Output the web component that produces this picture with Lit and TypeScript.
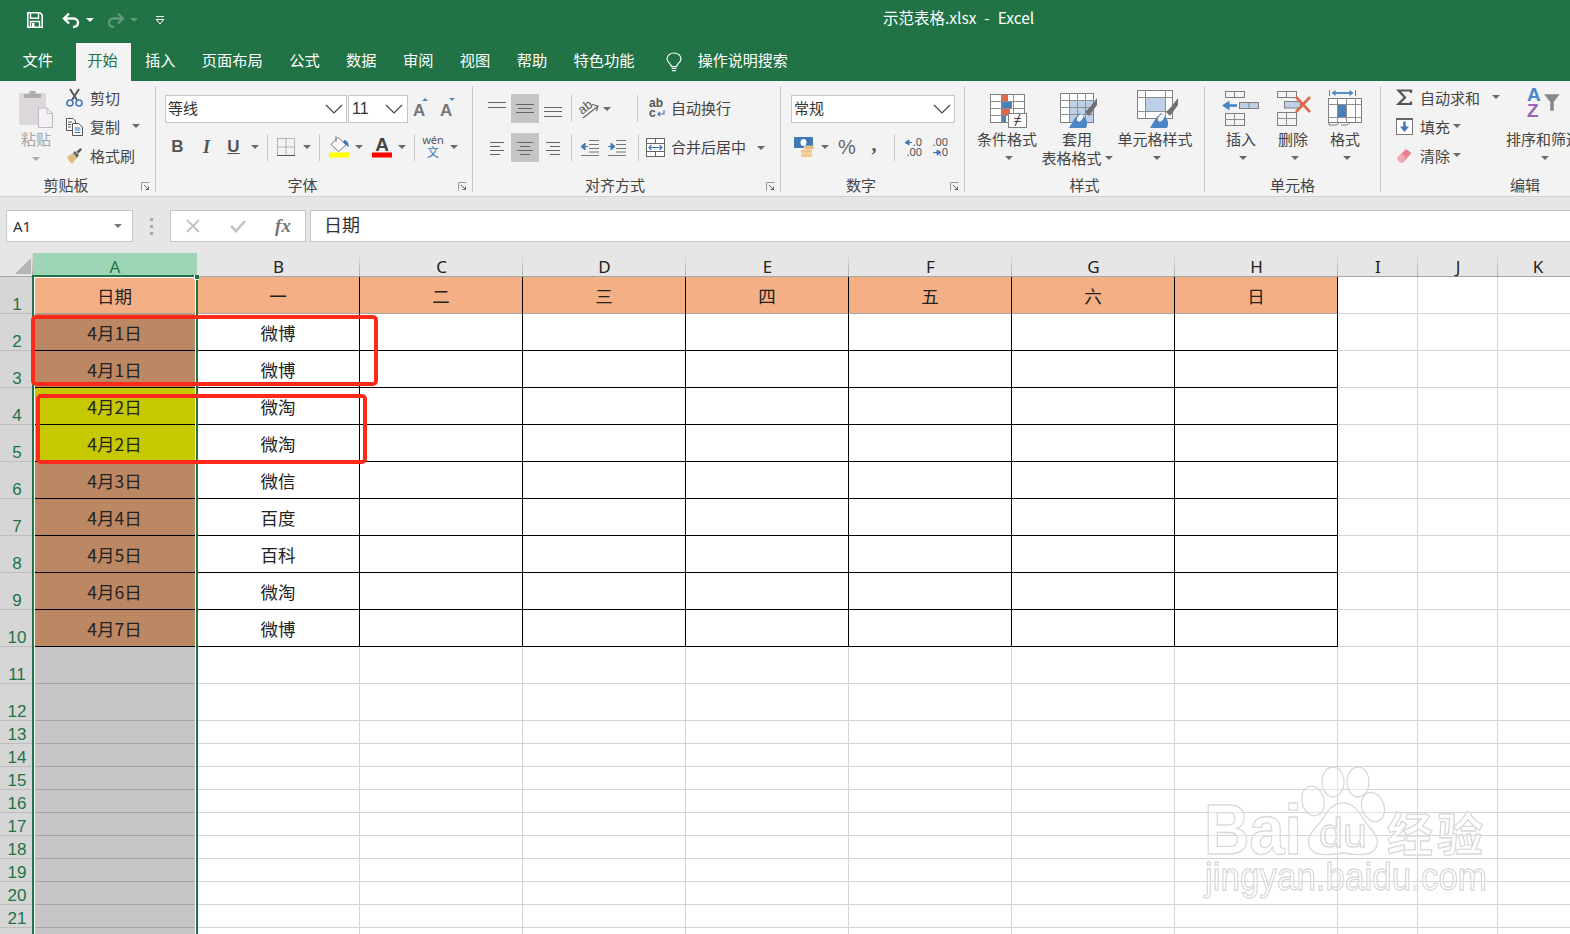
import { LitElement, html, svg, css, nothing } from "lit";
import { customElement } from "lit/decorators.js";

const tri = (c = "#6a6a6a") => html`<svg width="8" height="4" viewBox="0 0 8 4"><path d="M0 0H8L4 4Z" fill=${c}/></svg>`;
const chev = html`<svg width="18" height="10" viewBox="0 0 18 10"><path d="M1 1L9 9L17 1" fill="none" stroke="#444" stroke-width="1.2"/></svg>`;

/* ---------- title bar icons ---------- */
const icSave = html`<svg width="16" height="16" viewBox="0 0 16 16"><path d="M.8.8H13L15.2 3V15.2H.8Z" fill="none" stroke="#fff" stroke-width="1.6"/><path d="M3.5 1V6.2H11.5V1" fill="none" stroke="#fff" stroke-width="1.4"/><path d="M3.5 15V9.5H12.5V15" fill="none" stroke="#fff" stroke-width="1.4"/><rect x="5" y="11" width="2.5" height="4" fill="#fff"/></svg>`;
const icUndo = (c: string, flip: boolean) => html`<svg width="18" height="17" viewBox="0 0 18 17" class=${flip ? "flip" : ""}><path d="M7 1.5L2 6.5L7 11.5M2.5 6.5H11.5C14.5 6.5 16 8.5 16 10.5C16 12.8 14.5 15 11 15" fill="none" stroke=${c} stroke-width="2.4"/></svg>`;
const icCustom = html`<svg width="10" height="9" viewBox="0 0 10 9"><path d="M1 .6H9" stroke="#fff"/><path d="M1.2 3.5H8.8L5 8Z" fill="none" stroke="#fff"/></svg>`;
const icBulb = html`<svg width="16" height="20" viewBox="0 0 16 20"><path d="M5.4 14.5C5.2 11.5 1 10.5 1 7C1 3.3 4.2 1 8 1S15 3.3 15 7C15 10.5 10.8 11.5 10.6 14.5Z" fill="none" stroke="#fff" stroke-width="1.2"/><path d="M5.6 16.4H10.4M6.2 18.6H9.8" stroke="#fff" stroke-width="1.2"/></svg>`;

/* ---------- clipboard ---------- */
const icPaste = html`<svg width="34" height="38" viewBox="22 90 34 38"><rect x="22" y="93" width="27" height="32" rx="2" fill="#dbd7db"/><path d="M27 98V94H32.5V91H38.5V94H44V98Z" fill="#aeaaae"/><path d="M41.5 108H50L55.5 113.5V127.5H41.5Z" fill="#f4f0f7" stroke="#bdb9bd"/><path d="M50 108V113.5H55.5" fill="none" stroke="#bdb9bd"/></svg>`;
const icCut = html`<svg width="17" height="18" viewBox="0 0 17 18"><path d="M4 0L11 11M13 0L6 11" stroke="#555" stroke-width="2"/><circle cx="4" cy="14" r="3" fill="none" stroke="#3f78b4" stroke-width="1.6"/><circle cx="13" cy="14" r="3" fill="none" stroke="#3f78b4" stroke-width="1.6"/></svg>`;
const icCopy = html`<svg width="17" height="18" viewBox="0 0 17 18"><path d="M.5.5H7L9.5 3V12.5H.5Z" fill="#fff" stroke="#555"/><path d="M6.5 5.5H12.5L16.5 9V17.5H6.5Z" fill="#fff" stroke="#555"/><path d="M2 4H6M2 6.5H5M2 9H5" stroke="#555"/><path d="M8.5 10H14.5M8.5 12H14.5M8.5 14.5H14.5" stroke="#3f78b4"/></svg>`;
const icBrush = html`<svg width="17" height="18" viewBox="0 0 17 18"><path d="M1 10L7 6L11 11L6 17C4 15 2 13 1 10Z" fill="#e3bd80"/><path d="M7 6L9 4L13 8L11 11Z" fill="#6b6b6b"/><path d="M10.5 4.5L14.5 1L16 2.5L12.5 6.5Z" fill="#555"/></svg>`;

/* ---------- font ---------- */
const icGrow = (up: boolean) => html`<svg width="20" height="20" viewBox="0 0 20 20" class="up1"><text x="1" y="18" class="ta">A</text><path d=${up ? "M10 3L13 0L16 3Z" : "M10 0H16L13 3Z"} fill="#4a86c5"/></svg>`;
const icBorder = html`<svg width="18" height="18" viewBox="0 0 18 18"><path d="M.5.5H17.5V17M.5.5V17M9 .5V17M.5 9H17.5" fill="none" stroke="#777" stroke-dasharray="1 1"/><path d="M0 17.5H18" stroke="#555"/></svg>`;
const icFill = html`<svg width="22" height="22" viewBox="0 0 22 22"><path d="M10 1.500L18 9L10.5 15.500L3 8.500Z" fill="#fff" stroke="#777"/><path d="M8 0V6" stroke="#777"/><path d="M16 4C19.500 4 21 8 20.500 11C19 9.500 17.500 8.500 15 6.500Z" fill="#3f78b4"/><rect x="1" y="16.5" width="20" height="5" fill="#ff0"/></svg>`;
const icColor = html`<svg width="22" height="22" viewBox="0 0 22 22"><text x="11" y="15" text-anchor="middle" class="tc">A</text><rect x="1" y="16.5" width="20" height="5" fill="#f00"/></svg>`;
const icWen = html`<svg width="20" height="22" viewBox="0 0 20 22"><text x="10" y="8" text-anchor="middle" class="tw">wén</text><text x="10" y="20.500" text-anchor="middle" class="tz">文</text></svg>`;

/* ---------- alignment ---------- */
const lines = (ys: number[], xs: [number, number][]) => html`<svg width="20" height="20" viewBox="0 0 20 20">${ys.map((y, i) => svg`<path d="M${xs[i % xs.length][0]} ${y}.5H${xs[i % xs.length][1]}" stroke="#666"/>`)}</svg>`;
const F: [number, number][] = [[1, 19]];
const icAT = lines([3, 8], F);
const icAM = lines([5, 9, 13], [[1, 19], [3, 17]]);
const icAB = lines([8, 12, 17], F);
const icHL = lines([4, 8, 12, 16], [[3, 17], [3, 13]]);
const icHC = lines([4, 8, 12, 16], [[2, 18], [5, 15]]);
const icHR = lines([4, 8, 12, 16], [[3, 17], [7, 17]]);
const icOrient = html`<svg width="20" height="20" viewBox="0 0 20 20"><text x="0" y="13" transform="rotate(-38 6 10)" class="tor">ab</text><path d="M4 19L18 8M13 5.500L19 7L17.500 12" fill="none" stroke="#666" stroke-width="1.2"/></svg>`;
const icWrap = html`<svg width="18" height="20" viewBox="0 0 18 20"><text x="1" y="8" class="tlab">ab</text><text x="1" y="18" class="tlab">c</text><path d="M16 11V15H10M12 13L10 15L12 17" fill="none" stroke="#3f78b4" stroke-width="1.2"/></svg>`;
const icIndent = (inward: boolean) => html`<svg width="20" height="18" viewBox="0 0 20 18"><path d="M9 1.5H19M9 5.5H19M9 9.500H19M9 13H19M1 16.500H19" stroke="#777"/><path d=${inward ? "M1 7.500H5M4 4L8 7.500L4 11Z" : "M8 7.500H4M5 4L1 7.500L5 11Z"} fill="#3f78b4" stroke="#3f78b4"/></svg>`;
const icMerge = html`<svg width="19" height="19" viewBox="0 0 19 19"><rect x=".5" y=".5" width="18" height="18" fill="#fff" stroke="#666"/><path d="M.5 5.500H18.500M.5 13.500H18.500M9.500 .5V5.500M9.500 13.500V18.500" stroke="#666"/><path d="M3 9.500H16M5.500 7L3 9.500L5.500 12M13.500 7L16 9.500L13.500 12" fill="none" stroke="#3f78b4" stroke-width="1.2"/></svg>`;

/* ---------- number ---------- */
const icCur = html`<svg width="21" height="21" viewBox="0 0 21 21"><rect x="0" y="0" width="19" height="11" rx="1" fill="#3f78b4"/><ellipse cx="9.500" cy="5.500" rx="3" ry="3.500" fill="#fff"/><rect x="10" y="9" width="10" height="3" rx="1" fill="#e8b666" stroke="#f3f3f3" stroke-width=".5"/><rect x="7" y="12.500" width="11" height="3.500" rx="1" fill="#f0c888"/><rect x="7" y="16.500" width="11" height="3.500" rx="1" fill="#f0c888"/></svg>`;
const icDec = (top: string, bot: string, topArrow: boolean) => html`<svg width="24" height="22" viewBox="0 0 24 22"><text x="20" y="10" text-anchor="end" class="td">${top}</text><text x="20" y="20" text-anchor="end" class="td">${bot}</text><path d=${topArrow ? "M10 6.500H7M7 4L3 6.500L7 9Z" : "M5 16.500H9M9 14L13 16.500L9 19Z"} fill="#3f78b4" stroke="#3f78b4"/></svg>`;

/* ---------- styles (absolute-coordinate viewBoxes) ---------- */
const gridPaths = (x0: number, y0: number, x1: number, y1: number, xs: number[], ys: number[]) => svg`<rect x=${x0 + 0.5} y=${y0 + 0.5} width=${x1 - x0} height=${y1 - y0} fill="none" stroke="#7f7f7f"/>${xs.map((x) => svg`<path d="M${x}.5 ${y0}V${y1}" stroke="#8f8f8f"/>`)}${ys.map((y) => svg`<path d="M${x0} ${y}.5H${x1}" stroke="#8f8f8f"/>`)}`;
const brush = (dx: number) => svg`<g transform="translate(${dx} 0)"><path d="M1085 112L1090 107L1097 98V105L1089 116Z" fill="#707070"/><path d="M1085 118L1080 113L1075 118L1069 128H1086C1088 124 1087 120 1085 118Z" fill="#4a86c5"/><ellipse cx="1080" cy="118" rx="2.500" ry="4" fill="#f3f3f3" transform="rotate(35 1080 118)"/></g>`;
const icCond = html`<svg width="40" height="40" viewBox="987 90 40 40"><rect x="990" y="94" width="34" height="28" fill="#fff"/><rect x="1001" y="95" width="7" height="7" fill="#e0684a"/><rect x="1001" y="102" width="11" height="7" fill="#4a7fb8"/><rect x="1001" y="109" width="9" height="7" fill="#e0684a"/><rect x="1001" y="116" width="5" height="6" fill="#4a7fb8"/>${gridPaths(990, 94, 1024, 122, [1001, 1013], [101, 108, 115])}<rect x="1008.500" y="113.500" width="18" height="14" fill="#fff" stroke="#7f7f7f"/><text x="1017.500" y="125" text-anchor="middle" class="tne">≠</text></svg>`;
const icTbl = html`<svg width="40" height="40" viewBox="1057 90 40 40"><rect x="1060" y="93" width="33" height="29" fill="#fff"/><rect x="1069" y="100" width="24" height="22" fill="#bed0e6"/>${gridPaths(1060, 93, 1093, 122, [1069, 1077, 1085], [100, 107, 114])}${brush(0)}</svg>`;
const icCell = html`<svg width="40" height="40" viewBox="1135 90 40 40"><rect x="1137" y="90.500" width="35" height="28" fill="#fff"/><rect x="1145" y="97" width="20" height="14" fill="#bed0e6"/>${gridPaths(1137, 90, 1172, 118, [1145, 1165], [97, 111])}${brush(81)}</svg>`;

/* ---------- cells ---------- */
const cellsRow = (x: number, y: number, n: number, fill = "#f3f3f3") => svg`<rect x=${x + 0.5} y=${y + 0.5} width=${n * 9.5} height="6" fill=${fill} stroke="#7f7f7f"/>${Array.from({ length: n - 1 }, (_, i) => svg`<path d="M${x + 9.5 * (i + 1)} ${y}V${y + 7}" stroke="#7f7f7f"/>`)}`;
const icIns = html`<svg width="40" height="40" viewBox="1221 90 40 40">${cellsRow(1225, 91, 2)}<rect x="1239.500" y="102.500" width="19" height="6" fill="#bed0e6" stroke="#7f7f7f"/><path d="M1249 102V109" stroke="#7f7f7f"/><path d="M1237 105.500H1227" stroke="#4a86c5" stroke-width="2.600"/><path d="M1229.500 100.500L1222 105.500L1229.500 110.500Z" fill="#4a86c5"/>${gridPaths(1225, 113, 1244, 125, [1234], [119])}</svg>`;
const icDel = html`<svg width="40" height="40" viewBox="1273 90 40 40">${cellsRow(1277, 91, 2)}<rect x="1284.500" y="101.500" width="16" height="6.500" fill="#bed0e6" stroke="#7f7f7f"/>${gridPaths(1277, 112, 1296, 125, [1286], [118])}<path d="M1296 97L1310 112M1310 97L1296 112" stroke="#e0684a" stroke-width="2.600"/></svg>`;
const icFmt = html`<svg width="40" height="40" viewBox="1325 90 40 40"><path d="M1329.500 90V96M1355.500 90V96" stroke="#4a86c5"/><path d="M1333 93H1352" stroke="#4a86c5" stroke-width="1.800"/><path d="M1335.500 90L1331.500 93L1335.500 96ZM1349.500 90L1353.500 93L1349.500 96Z" fill="#4a86c5"/><rect x="1328" y="98" width="33" height="24" fill="#fff"/><rect x="1337" y="105" width="10" height="12" fill="#4a7fb8"/>${gridPaths(1328, 98, 1361, 122, [1337, 1346, 1355], [104, 117])}<path d="M1329 122V125H1337L1340 122M1341 125H1347L1351 122" fill="none" stroke="#7f7f7f"/></svg>`;

/* ---------- editing ---------- */
const icSigma = html`<svg width="17" height="17" viewBox="0 0 17 17"><path d="M15 4V1.500H2.500L9 8.500L2.500 15H15V12.500" fill="none" stroke="#555" stroke-width="2.200"/></svg>`;
const icFillD = html`<svg width="17" height="17" viewBox="0 0 17 17"><rect x=".5" y=".5" width="16" height="16" fill="#fff" stroke="#777"/><rect x="0" y="0" width="17" height="2" fill="#666"/><path d="M8.500 3.500V10" stroke="#3f78b4" stroke-width="2.400"/><path d="M4 8.500H13L8.500 14Z" fill="#3f78b4"/></svg>`;
const icErase = html`<svg width="17" height="17" viewBox="0 0 17 17"><path d="M1 11L10 2L15.500 6L7 15.500H4Z" fill="#ea8292"/><path d="M1 11L5.500 6.500L9.500 11L6 15.500H4Z" fill="#f1aab5"/></svg>`;
const icSort = html`<svg width="34" height="32" viewBox="0 0 34 32"><text x="0" y="14" class="tsa">A</text><text x="0" y="30" class="tsz">Z</text><path d="M16.500 7H33L27 15V24H23V15Z" fill="#888" stroke="#f3f3f3" stroke-width=".5"/></svg>`;

const launcher = html`<svg class="launch" width="9" height="9" viewBox="0 0 9 9"><path d="M.5 8.500V.5H8.500" fill="none" stroke="#999"/><path d="M3 3L7.500 7.500M7.500 4.500V7.500H4.500" fill="none" stroke="#666"/></svg>`;

type Cell = [number, unknown?, string?];
const SEP = "sep";

@customElement("app-root")
export class AppRoot extends LitElement {
  static styles = css`
    :host { display: block; position: relative; width: 1570px; height: 934px; overflow: hidden; background: #fff; font-family: "Noto Sans CJK SC", "Noto Sans", sans-serif; color: #444; }
    svg { display: block; flex: none; overflow: visible; }
    .flip { transform: scaleX(-1); }
    .up1 { margin-top: -2px; }
    .title { display: flex; align-items: flex-start; height: 43px; background: #217346; color: #fff; }
    .qat { display: flex; align-items: center; width: 883px; padding-left: 27px; box-sizing: border-box; height: 40px; }
    .q1 { margin-left: 19px; } .q2 { margin-left: 6px; } .q3 { margin-left: 13px; } .q4 { margin-left: 5px; } .q5 { margin-left: 17px; }
    .tname { font-size: 15.5px; line-height: 20px; margin-top: 7px; white-space: pre; word-spacing: .5px; }
    .tabs { display: flex; height: 38px; background: #217346; color: #fff; font-size: 15.25px; padding-left: 9px; }
    .tab { padding: 0 13.2px; line-height: 33px; }
    .tab.first { margin-right: 10px; padding: 0 13.4px; }
    .tab.on { background: #f3f3f3; color: #217346; padding: 0 13px 0 11px; margin-right: 1px; }
    .search { display: flex; align-items: center; gap: 16px; margin-left: 18px; height: 38px; }
    .search span { margin-top: -5px; font-size: 15px; }
    .ribbon { display: flex; height: 106px; padding: 5px 0 4px; background: #f3f3f3; border-bottom: 1px solid #d2d2d2; overflow: hidden; }
    .rsep { flex: none; width: 1px; background: #c6c6c6; }
    .group { flex: none; display: flex; flex-direction: column; box-sizing: border-box; }
    .g1 { width: 155px; } .g2 { width: 316px; } .g3 { width: 307px; } .g4 { width: 183px; } .g5 { width: 239px; } .g6 { width: 175px; } .g7 { width: 288px; }
    .body { height: 90px; display: flex; }
    .label { position: relative; height: 16px; line-height: 18px; font-size: 15px; text-align: center; color: #444; }
    .label.pr { padding-right: 23px; }
    .launch { position: absolute; right: 5px; top: 6px; }
    .col { display: flex; flex-direction: column; gap: 9px; padding-top: 1px; }
    .smallrow { display: flex; align-items: center; height: 20px; font-size: 15px; white-space: nowrap; }
    .smallrow svg:first-child { margin-right: 7px; }
    .smallrow > svg:first-child { margin-top: 1px; }
    .smallrow .tr { margin-left: 12px; }
    .smallrow .tr2 { margin-left: 3px; }
    .smallrow .tr3 { margin-left: 12px; }
    .paste { display: flex; flex-direction: column; align-items: center; width: 44px; margin-left: 14px; margin-right: 8px; padding-top: 4px; color: #a4a4a4; font-size: 15px; }
    .paste .txt { line-height: 20px; margin-top: 1px; }
    .paste .ar { margin-top: 8px; }
    .stack { display: flex; flex-direction: column; padding-top: 9px; }
    .s2 { padding-left: 9px; } .s3 { padding-left: 10px; padding-top: 8px; } .s4 { padding-left: 10px; }
    .stack .row { display: flex; align-items: center; }
    .row1 { height: 27px; }
    .row2 { height: 24px; margin-top: 13px; }
    .s3 .row { height: 29px; }
    .s3 .row + .row { margin-top: 10px; }
    .combo { display: flex; align-items: center; justify-content: space-between; box-sizing: border-box; height: 28px; background: #fff; border: 1px solid #c6c6c6; font-size: 15px; color: #333; padding: 0 3px 0 2px; }
    .combo span { margin-top: -3px; }
    .cf { width: 182px; } .cs { width: 60px; margin-left: 1px; padding-left: 3px; font-family: "Liberation Sans", sans-serif; font-size: 16px; color: #333; padding-right: 4px; }
    .cs span { margin-top: 0; }
    .cn { width: 164px; padding-right: 3px; }
    .cell { flex: none; display: flex; align-items: center; justify-content: center; height: 100%; }
    .cell.hi { background: #c5c5c5; }
    .vs { width: 1px; height: 27px; background: #c6c6c6; }
    .sg { position: relative; left: -0.5px; }
    .b { font: bold 17px "Liberation Sans", sans-serif; color: #555; }
    .i { font: italic bold 18px "Liberation Serif", serif; color: #555; }
    .u { font: bold 17px "Liberation Sans", sans-serif; color: #555; text-decoration: underline; }
    .pct { font: 20px "Liberation Sans", sans-serif; color: #666; }
    .cm { font: bold 20px "Liberation Serif", serif; color: #555; margin-top: -6px; }
    .lbl { font-size: 15px; color: #444; white-space: nowrap; margin-top: -2px; }
    .big { flex: none; display: flex; flex-direction: column; align-items: center; font-size: 15px; color: #444; white-space: nowrap; }
    .big .ico { display: flex; align-items: flex-start; justify-content: center; margin-top: 4px; height: 39px; }
    .big .t { line-height: 19px; height: 19px; display: flex; align-items: center; gap: 3px; }
    .big .ar { height: 19px; display: flex; align-items: center; margin-left: 3px; }
    .g5 .body { padding-left: 12px; gap: 3px; }
    .b1 { width: 60px; } .b2 { width: 74px; } .b3 { width: 76px; }
    .g6 .body { padding-left: 10px; }
    .b4 { width: 52px; }
    .g7 .body { padding-left: 15px; }
    .ecol { width: 110px; }
    .sortb { width: 75px; }
    .sortb .ico { margin-top: 1px; height: 42px; }
    .fbar { display: flex; align-items: flex-start; box-sizing: border-box; height: 56px; padding-top: 13px; background: #e6e6e6; }
    .fbox { box-sizing: border-box; height: 32px; background: #fff; border: 1px solid #c6c6c6; display: flex; align-items: center; }
    .namebox { width: 127px; margin-left: 6px; justify-content: space-between; padding: 0 10px 0 6px; font: 15px "Noto Sans", sans-serif; color: #333; }
    .dots { width: 37px; display: flex; flex-direction: column; align-items: center; gap: 4px; padding-top: 8px; }
    .dots i { width: 3px; height: 3px; background: #a9a9a9; display: block; }
    .fx { width: 136px; margin-right: 4px; color: #bdbdbd; }
    .fx .slot { flex: none; display: flex; justify-content: center; }
    .fx .s1 { width: 44px; } .fx .s2x { width: 46px; } .fx .s3x { width: 44px; font: italic bold 19px "Liberation Serif", serif; color: #777; }
    .finput { flex: 1; padding: 0 0 4px 13px; font-size: 18px; color: #333; border-right: none; }
    .wrap { position: relative; height: 681px; overflow: hidden; }
    .grid { display: grid; grid-template-columns: 33px 164px 163px 163px 163px 163px 163px 163px 163px 80px 80px 80px; grid-auto-rows: 23px; font-size: 17.5px; color: #222; }
    .grid > .hd { height: 24px; box-sizing: border-box; background: #e6e6e6 linear-gradient(#e6e6e6, #aaa) right / 1px 100% no-repeat; border-bottom: 1px solid #a5a5a5; display: flex; align-items: center; justify-content: center; font: 17px "Noto Sans", sans-serif; padding-top: 4px; }
    .grid > .hd.sel { background: #9fd5b7; color: #217346; }
    .corner { position: relative; }
    .corner svg { position: absolute; left: 15px; top: 5px; }
    .rh { box-sizing: border-box; background: #d6d6d6; border-bottom: 1px solid #bdbdbd; color: #217346; font: 17px "Liberation Sans", sans-serif; display: flex; align-items: flex-end; justify-content: center; line-height: 16px; padding-left: 1px; height: 100%; }
    .c { box-sizing: border-box; display: flex; align-items: center; justify-content: center; border-right: 1px solid #d4d4d4; border-bottom: 1px solid #d4d4d4; height: 100%; }
    .c.head { background: #f4b084; border-right-color: #000; border-bottom-color: #a5a5a5; }
    .c.body1 { border-right-color: #000; border-bottom-color: #000; }
    .c.brown { background: #bc8763; }
    .c.olive { background: #c6c800; }
    .c.gray { background: #c6c6c6; border-bottom-color: #a5a5a5; }
    .selbox { position: absolute; left: 32px; top: 22px; width: 166px; height: 700px; box-sizing: border-box; border: 2px solid #217346; box-shadow: inset 0 0 0 1px #fff; }
    .handle { position: absolute; left: 194px; top: 22px; width: 5px; height: 5px; background: #217346; box-sizing: border-box; border-left: 1px solid #fff; border-bottom: 1px solid #fff; }
    .red { position: absolute; box-sizing: border-box; border: 4px solid #ff2a1a; border-radius: 5px; }
    .r1 { left: 31px; top: 315px; width: 347px; height: 71px; }
    .r2 { left: 36px; top: 393.500px; width: 331px; height: 70.500px; }
    .wm { position: absolute; left: 1190px; top: 755px; pointer-events: none; filter: blur(0.5px); }
    text.ta { font: bold 17px "Liberation Sans", sans-serif; fill: #777; }
    text.tc { font: bold 19px "Liberation Sans", sans-serif; fill: #444; }
    text.tw { font: 11px "Noto Sans", sans-serif; fill: #555; }
    text.tz { font: 12px "Noto Sans CJK SC", sans-serif; fill: #3f78b4; }
    text.tlab { font: bold 12px "Liberation Sans", sans-serif; fill: #555; }
    text.tor { font: 13px "Liberation Sans", sans-serif; fill: #555; }
    text.td { font: 11px "Noto Sans", sans-serif; fill: #555; }
    text.tne { font: 15px "Noto Sans", sans-serif; fill: #444; }
    text.tsa { font: bold 19px "Liberation Sans", sans-serif; fill: #4a86c5; }
    text.tsz { font: bold 19px "Liberation Sans", sans-serif; fill: #9a62b8; }
    .wm text, .wm ellipse, .wm path { fill: rgba(255,255,255,.35); stroke: #d9d9d9; stroke-width: 1.3; }
    .wm .wb { font: bold 70px "Liberation Sans", sans-serif; }
    .wm .wd { font: 40px "Liberation Sans", sans-serif; }
    .wm .wc { font: bold 46px "Noto Sans CJK SC", sans-serif; }
    .wm .wj { font: 38px "Liberation Sans", sans-serif; }
  `;

  private rowCells(cells: Cell[]) {
    return cells.map(([w, content, cls]) =>
      content === SEP
        ? html`<div class="cell" style="width:${w}px"><div class="vs"></div></div>`
        : html`<div class="cell ${cls ?? ""}" style="width:${w}px">${content ?? nothing}</div>`
    );
  }

  private group(cls: string, label: string, launch: boolean, body: unknown) {
    return html`<div class="group ${cls}"><div class="body">${body}</div><div class="label ${launch ? "pr" : ""}">${label}${launch ? launcher : nothing}</div></div>`;
  }

  private big(cls: string, ico: unknown, t1: unknown, t2?: unknown) {
    return html`<div class="big ${cls}"><div class="ico">${ico}</div><div class="t">${t1}</div>${t2 ? html`<div class="t">${t2}</div>` : html`<div class="ar">${tri()}</div>`}</div>`;
  }

  private ribbon() {
    const T = tri();
    const r2: Cell[] = [[1], [24, html`<span class="b">B</span>`], [34, html`<span class="i">I</span>`], [20, html`<span class="u">U</span>`], [22, T], [4, SEP], [32, icBorder], [10, T], [16, SEP], [22, icFill], [18, T], [28, icColor], [12, T], [14, SEP], [22, icWen], [20, T]];
    const a1: Cell[] = [[28, icAT], [28, icAM, "hi"], [28, icAB], [9, SEP], [26, icOrient], [10, T], [15.5], [20, SEP], [18.5, icWrap], [5], [60, html`<span class="lbl">自动换行</span>`]];
    const a2: Cell[] = [[28, icHL], [28, icHC, "hi"], [28, icHR], [9, SEP], [27, icIndent(false)], [28, icIndent(true)], [14, SEP], [21, icMerge], [5], [75, html`<span class="lbl">合并后居中</span>`], [11], [8, T]];
    const n2: Cell[] = [[26, icCur], [16, T], [28, html`<span class="pct">%</span>`], [26, html`<span class="cm">,</span>`], [14, SEP], [25, icDec(".0", ".00", true)], [28, icDec(".00", ".0", false)]];
    return html`<div class="ribbon">
      ${this.group("g1", "剪贴板", true, html`
        <div class="paste">${icPaste}<div class="txt">粘贴</div><div class="ar">${tri("#a8a8a8")}</div></div>
        <div class="col">
          <div class="smallrow">${icCut}<span>剪切</span></div>
          <div class="smallrow">${icCopy}<span>复制</span><span class="tr">${T}</span></div>
          <div class="smallrow">${icBrush}<span>格式刷</span></div>
        </div>`)}
      <div class="rsep"></div>
      ${this.group("g2", "字体", true, html`<div class="stack s2">
        <div class="row row1"><div class="combo cf"><span>等线</span>${chev}</div><div class="combo cs"><span>11</span>${chev}</div>
          ${this.rowCells([[28, icGrow(true)], [26, icGrow(false)]])}</div>
        <div class="row row2 sg">${this.rowCells(r2)}</div></div>`)}
      <div class="rsep"></div>
      ${this.group("g3", "对齐方式", true, html`<div class="stack s3">
        <div class="row">${this.rowCells(a1)}</div><div class="row">${this.rowCells(a2)}</div></div>`)}
      <div class="rsep"></div>
      ${this.group("g4", "数字", true, html`<div class="stack s4">
        <div class="row row1"><div class="combo cn"><span>常规</span>${chev}</div></div>
        <div class="row row2">${this.rowCells(n2)}</div></div>`)}
      <div class="rsep"></div>
      ${this.group("g5", "样式", false, html`
        ${this.big("b1", icCond, "条件格式")}
        ${this.big("b2", icTbl, "套用", html`<span>表格格式</span>${T}`)}
        ${this.big("b3", icCell, "单元格样式")}`)}
      <div class="rsep"></div>
      ${this.group("g6", "单元格", false, html`
        ${this.big("b4", icIns, "插入")}
        ${this.big("b4", icDel, "删除")}
        ${this.big("b4", icFmt, "格式")}`)}
      <div class="rsep"></div>
      ${this.group("g7", "编辑", false, html`
        <div class="col ecol">
          <div class="smallrow">${icSigma}<span>自动求和</span><span class="tr3">${T}</span></div>
          <div class="smallrow">${icFillD}<span>填充</span><span class="tr2">${T}</span></div>
          <div class="smallrow">${icErase}<span>清除</span><span class="tr2">${T}</span></div>
        </div>
        ${this.big("sortb", icSort, "排序和筛选")}`)}
    </div>`;
  }

  private sheet() {
    const colW = ["A", "B", "C", "D", "E", "F", "G", "H", "I", "J", "K"];
    const head = ["日期", "一", "二", "三", "四", "五", "六", "日"];
    const colA = ["4月1日", "4月1日", "4月2日", "4月2日", "4月3日", "4月4日", "4月5日", "4月6日", "4月7日"];
    const colB = ["微博", "微博", "微淘", "微淘", "微信", "百度", "百科", "微淘", "微博"];
    const rows = Array.from({ length: 22 }, (_, i) => i + 1);
    const cellCls = (r: number, c: number) => {
      if (r === 1 && c < 8) return "head";
      if (r >= 2 && r <= 10 && c < 8) {
        if (c === 0) return "body1 " + (r === 4 || r === 5 ? "olive" : "brown");
        return "body1";
      }
      if (c === 0) return "gray";
      return "";
    };
    const txt = (r: number, c: number) => {
      if (r === 1) return head[c] ?? "";
      if (r <= 10 && c === 0) return colA[r - 2];
      if (r <= 10 && c === 1) return colB[r - 2];
      return "";
    };
    const heights = rows.map((r) => (r <= 12 ? "37px" : "23px")).join(" ");
    return html`<div class="wrap">
      <div class="grid" style="grid-template-rows:24px ${heights}">
        <div class="hd corner"><svg width="16" height="16" viewBox="0 0 16 16"><path d="M16 0V16H0Z" fill="#b4b4b4"/></svg></div>
        ${colW.map((n, i) => html`<div class="hd ${i === 0 ? "sel" : ""}">${n}</div>`)}
        ${rows.map((r) => html`<div class="rh">${r < 22 ? r : ""}</div>${colW.map((_, c) => html`<div class="c ${cellCls(r, c)}">${txt(r, c)}</div>`)}`)}
      </div>
      <div class="selbox"></div><div class="handle"></div>
    </div>`;
  }

  render() {
    return html`
      <div class="title">
        <div class="qat">${icSave}<span class="q1">${icUndo("#fff", false)}</span><span class="q2">${tri("#fff")}</span><span class="q3">${icUndo("#5d9a7c", true)}</span><span class="q4">${tri("#5d9a7c")}</span><span class="q5">${icCustom}</span></div>
        <div class="tname">示范表格.xlsx  -  Excel</div>
      </div>
      <div class="tabs">
        <div class="tab first">文件</div><div class="tab on">开始</div>
        ${["插入", "页面布局", "公式", "数据", "审阅", "视图", "帮助", "特色功能"].map((t) => html`<div class="tab">${t}</div>`)}
        <div class="search">${icBulb}<span>操作说明搜索</span></div>
      </div>
      ${this.ribbon()}
      <div class="fbar">
        <div class="fbox namebox"><span>A1</span>${tri("#777")}</div>
        <div class="dots"><i></i><i></i><i></i></div>
        <div class="fbox fx"><div class="slot s1"><svg width="16" height="16" viewBox="0 0 16 16"><path d="M2 2L14 14M14 2L2 14" stroke="#c4c4c4" stroke-width="2"/></svg></div><div class="slot s2x"><svg width="18" height="16" viewBox="0 0 18 16"><path d="M2 8L7 13L16 3" fill="none" stroke="#c4c4c4" stroke-width="2.600"/></svg></div><div class="slot s3x">fx</div></div>
        <div class="fbox finput">日期</div>
      </div>
      ${this.sheet()}
      <div class="red r1"></div><div class="red r2"></div>
      <svg class="wm" width="310" height="150" viewBox="1190 755 310 150">
        <text class="wb" x="1204" y="854" textLength="98" lengthAdjust="spacingAndGlyphs">Bai</text>
        <ellipse cx="1333" cy="782" rx="11" ry="15"/><ellipse cx="1358" cy="782" rx="11" ry="15"/><ellipse cx="1313" cy="801" rx="11" ry="15" transform="rotate(-15 1313 801)"/><ellipse cx="1373" cy="807" rx="11" ry="15" transform="rotate(-20 1373 807)"/>
        <path d="M1343 803C1330 803 1326 815 1319 824C1311 832 1307 838 1309 845C1312 856 1325 856 1343 853C1361 856 1374 856 1377 845C1379 838 1374 832 1367 824C1360 815 1356 803 1343 803Z"/>
        <text class="wd" x="1319" y="847" textLength="48" lengthAdjust="spacingAndGlyphs">du</text>
        <text class="wc" x="1387" y="851" textLength="96">经验</text>
        <text class="wj" x="1205" y="890" textLength="282" lengthAdjust="spacingAndGlyphs">jingyan.baidu.com</text>
      </svg>
    `;
  }
}
